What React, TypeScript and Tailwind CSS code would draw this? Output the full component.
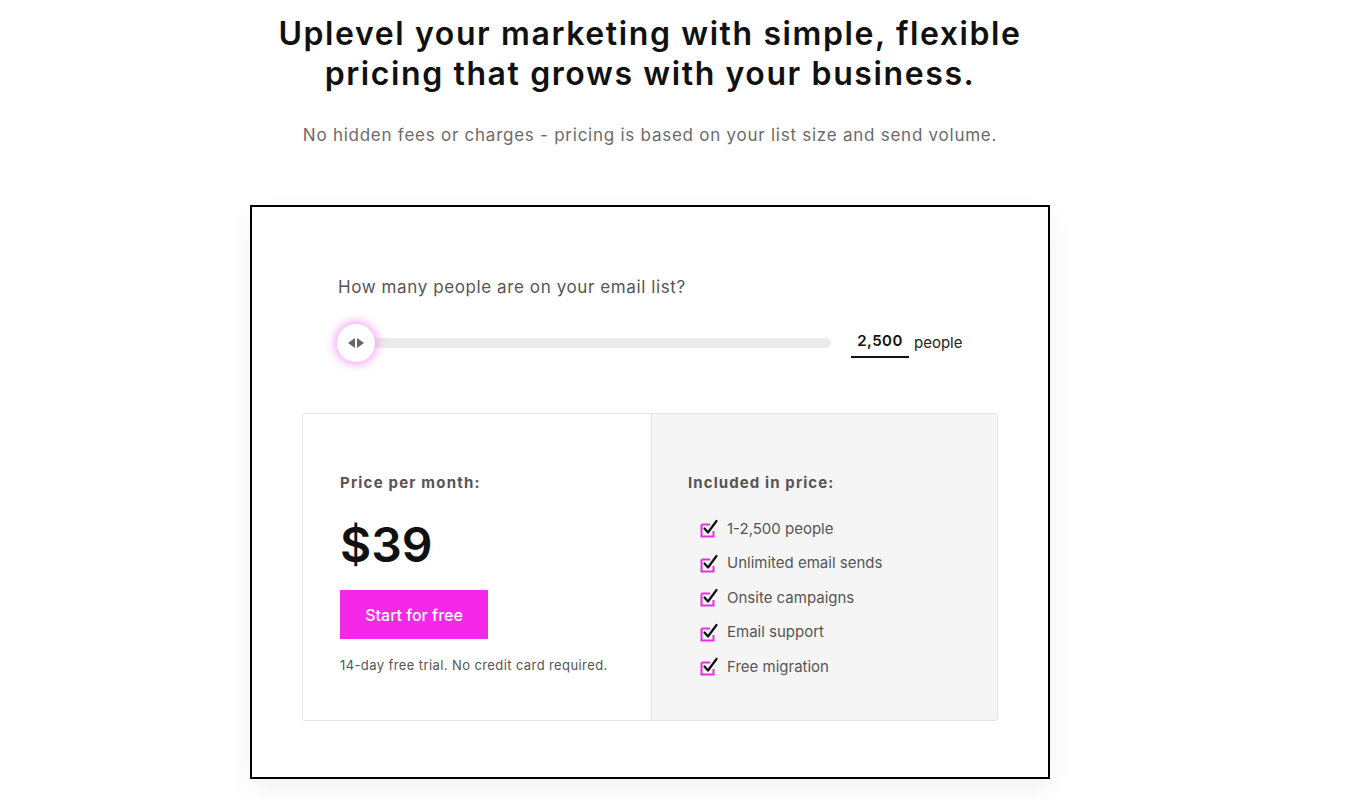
import React from "react";

const features = [
  "1-2,500 people",
  "Unlimited email sends",
  "Onsite campaigns",
  "Email support",
  "Free migration",
];

function CheckIcon() {
  return (
    <svg width="20" height="20" viewBox="0 0 20 20" className="shrink-0">
      <path d="M2.5 5.5 H11 M2.5 5.5 V17.5 H14.5 V12" fill="none" stroke="#e52ee0" strokeWidth="2" />
      <path d="M5.5 9.5 L9 13.5 L17.5 2" fill="none" stroke="#111" strokeWidth="2.2" strokeLinecap="round" strokeLinejoin="round" />
    </svg>
  );
}

export default function App() {
  const font = { fontFamily: "Inter, 'Liberation Sans', sans-serif" };
  return (
    <div className="w-[1300px] bg-white pb-6" style={font}>
      <div className="flex flex-col items-center pt-[14px]">
        <h1 className="text-center text-[32px] leading-[40px] font-semibold tracking-[1.6px] text-[#111]">
          Uplevel your marketing with simple, flexible
          <br />
          pricing that grows with your business.
        </h1>
        <p className="mt-[29px] text-[17px] tracking-[0.75px] text-[#6b6b6b]">
          No hidden fees or charges - pricing is based on your list size and send volume.
        </p>

        {/* Calculator card */}
        <div className="mt-[56px] w-[800px] h-[574px] border-2 border-black bg-white px-[50px] pt-[68px] shadow-[0_10px_24px_rgba(0,0,0,0.06)]">
          <p className="pl-[36px] text-[17px] tracking-[0.6px] text-[#555]">How many people are on your email list?</p>
          <div className="mt-[28px] flex items-center pl-[52px]">
            <div className="relative w-[477px] h-[10px] rounded-full bg-[#ebebeb]">
              <div className="absolute left-[-17px] top-[-14px] w-[38px] h-[38px] rounded-full bg-white shadow-[0_0_8px_3px_rgba(240,120,240,0.6)] flex items-center justify-center gap-[2px]">
                <span className="w-0 h-0 border-y-[5px] border-y-transparent border-r-[7px] border-r-[#666]" />
                <span className="w-0 h-0 border-y-[5px] border-y-transparent border-l-[7px] border-l-[#666]" />
              </div>
            </div>
            <div className="ml-[20px] w-[58px] border-b-2 border-[#111] pb-[3px] pt-[2px] text-center text-[15px] font-semibold tracking-[0.5px] text-[#111]">
              2,500
            </div>
            <span className="ml-[5px] text-[15px] text-[#222]">people</span>
          </div>

          <div className="mt-[55px] flex h-[308px] rounded-[3px] border border-[#e3e3e3] overflow-hidden">
            <div className="w-[348px] bg-white pl-[37px] pt-[58px]">
              <p className="text-[15px] font-bold tracking-[1.2px] text-[#555]">Price per month:</p>
              <p className="mt-[23px] text-[48px] leading-[56px] font-semibold text-[#111]">$39</p>
              <button className="mt-[17px] w-[148px] h-[49px] bg-[#f527e8] text-white text-[16px] font-medium">
                Start for free
              </button>
              <p className="mt-[17px] text-[13px] tracking-[0.4px] text-[#555]">14-day free trial. No credit card required.</p>
            </div>
            <div className="flex-1 border-l border-[#e3e3e3] bg-[#f5f5f5] pl-[36px] pt-[58px]">
              <p className="text-[15px] font-bold tracking-[1.1px] text-[#555]">Included in price:</p>
              <ul className="mt-[24px] flex flex-col gap-[12.5px] pl-[11px]">
                {features.map((f) => (
                  <li key={f} className="flex items-center gap-[8px] h-[22px] text-[15px] text-[#555]">
                    <CheckIcon />
                    {f}
                  </li>
                ))}
              </ul>
            </div>
          </div>
        </div>
      </div>
    </div>
  );
}
